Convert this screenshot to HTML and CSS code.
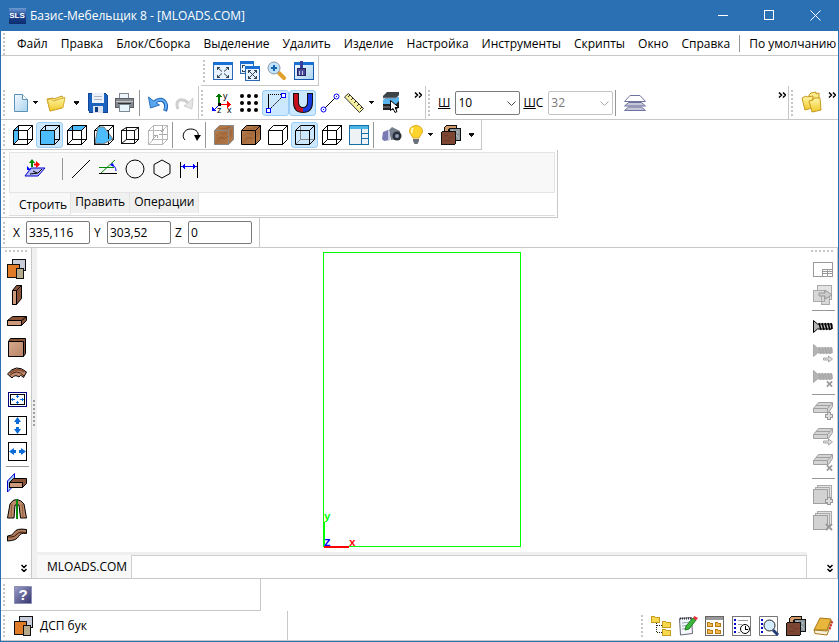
FILE: index.html
```html
<!DOCTYPE html>
<html lang="ru">
<head>
<meta charset="utf-8">
<title>Базис-Мебельщик 8 - [MLOADS.COM]</title>
<link rel="stylesheet" href="styles.css">
</head>
<body>
<svg class="defs" aria-hidden="true">
  <defs>
    <linearGradient id="g-wood" x1="0" y1="0" x2="1" y2="1"><stop offset="0" stop-color="#bd8250"/><stop offset=".5" stop-color="#a86e40"/><stop offset="1" stop-color="#b87c4a"/></linearGradient>
    <linearGradient id="g-gold" x1="0" y1="0" x2="0" y2="1"><stop offset="0" stop-color="#fff6a8"/><stop offset="1" stop-color="#f0c828"/></linearGradient>
    <linearGradient id="g-sky" x1="0" y1="0" x2="1" y2="1"><stop offset="0" stop-color="#f4fafe"/><stop offset="1" stop-color="#a9d3ee"/></linearGradient>
    <linearGradient id="g-violet" x1="0" y1="0" x2="1" y2="1"><stop offset="0" stop-color="#9a9cc8"/><stop offset="1" stop-color="#33356c"/></linearGradient>
    <linearGradient id="g-tan" x1="0" y1="0" x2="1" y2="1"><stop offset="0" stop-color="#d6a98c"/><stop offset="1" stop-color="#b98468"/></linearGradient>
    <linearGradient id="g-logo" x1="0" y1="0" x2="0" y2="1"><stop offset="0" stop-color="#6d9ad2"/><stop offset=".5" stop-color="#1c4592"/><stop offset="1" stop-color="#0d2c6c"/></linearGradient>
  </defs>
  <symbol id="wire" viewBox="0 0 20 20"><path d="M.5 5.500h14v14H.5zM5.500.5h14v14h-14z" fill="none" stroke="currentColor"/><path class="aa" d="M.5 5.500l5-5M14.500 5.500l5-5M14.500 19.500l5-5M.5 19.500l5-5" stroke="currentColor"/></symbol>
  <symbol id="solid" viewBox="0 0 20 20"><path class="aa" d="M.5 5.500l5-5h14v14l-5 5H.5z" stroke="currentColor"/><path d="M.5 5.500h14v14" fill="none" stroke="currentColor"/><path class="aa" d="M14.500 5.500l5-5" stroke="currentColor"/></symbol>
  <symbol id="grain" viewBox="0 0 20 20"><path class="aa" d="M2 17l5-4 4 1 3-3M2 11l4-3 4 1 3-2M5 3l5 1 6-2M17 12V6M3 14l3-2 5 1" fill="none" stroke="#8a562c" opacity=".5"/></symbol>
  <symbol id="stack" viewBox="0 0 20 20"><path d="M5.500.5h13v11h-13z" fill="#c8ccd8" stroke="#111"/><path d="M.5 5.500h12v13H.5z" fill="#e07c28" stroke="#111"/><path d="M9.500 9.500h7v10h-7z" fill="#b5ab8c" stroke="#111"/></symbol>
  <symbol id="fit" viewBox="0 0 20 20"><path d="M.5 1.500h19v17H.5z" fill="#e9f3fd" stroke="#2a68b4"/><path d="M0 1h20v3H0z" fill="#1a6fd4"/><path class="aa" d="M5 7l4 3.500M15 7l-4 3.500M5 16l4-3.500M15 16l-4-3.500" stroke="#345"/><path d="M4.500 9V6.500H7M13 6.500h2.500V9M4.500 14v2.500H7M13 16.500h2.500V14" fill="none" stroke="#345"/></symbol>
  <symbol id="panels" viewBox="0 0 20 20"><path d="M3.500 6.500v-4l2-2h10v4h-8v2z" fill="#d39a6c" stroke="#111"/><path d="M8.500 3.500h11v12h-11z" fill="#8f9a9e" stroke="#111"/><path class="aa" d="M11 5l2 2M16 6l1 2M15 10l2 2M17 13h1" stroke="#c0c8cc"/><path d="M.5 7.500l1-1h13v12l-1 1H.5z" fill="#7c4633" stroke="#111"/><path d="M3 10h4M8 12h4M3 15h6" stroke="#6c3a29"/></symbol>
  <symbol id="screw" viewBox="0 0 20 14"><path class="aa" d="M.5.5v12l4-3.500h14.500V4H4.500z" fill="#b4b4b4" stroke="currentColor"/><path class="aa" d="M6 3l2 7M9 3l2 7M12 3l2 7M15 3l2 7M18 3l1 6" stroke="currentColor" stroke-width="1.500"/></symbol>
  <symbol id="board" viewBox="0 0 20 12"><path class="aa" d="M.5 6.500l5-6h14v4l-4 6H.5z" fill="#d4d4d4" stroke="#a0a0a0"/><path class="aa" d="M.5 6.500h14v4M14.500 6.500l5-6M3 3.500h14" fill="none" stroke="#a0a0a0"/></symbol>
  <symbol id="plate" viewBox="0 0 20 20"><path d="M4.500.5h14v14h-14z" fill="#e2e2e2" stroke="#aaa"/><path d="M2.500 2.500h14v14h-14z" fill="#ddd" stroke="#aaa"/><path d="M.5 4.500h14v14H.5z" fill="#d2d2d2" stroke="#a0a0a0"/></symbol>
  <symbol id="m-plus" viewBox="0 0 8 8"><path d="M2.500.5h3v2h2v3h-2v2h-3v-2h-2v-3h2z" fill="#ddd" stroke="#999"/></symbol>
  <symbol id="m-x" viewBox="0 0 8 8"><path class="aa" d="M1 1l6 6M7 1L1 7" stroke="#999" stroke-width="2"/></symbol>
  <symbol id="m-arrow" viewBox="0 0 10 8"><path class="aa" d="M.5 3h5V1l4 3-4 3V5h-5z" fill="#ddd" stroke="#aaa"/></symbol>
  <symbol id="caret" viewBox="0 0 5 3"><path d="M0 0h5L2.500 3z" fill="#111"/></symbol>
  <symbol id="more" viewBox="0 0 8 6"><path class="aa" d="M1 .5L3.500 3 1 5.500M5 .5L7.500 3 5 5.500" fill="none" stroke="#000" stroke-width="1.500"/></symbol>
  <symbol id="down" viewBox="0 0 6 8"><path class="aa" d="M.5 1L3 3.500 5.500 1M.5 5L3 7.500 5.500 5" fill="none" stroke="#000" stroke-width="1.500"/></symbol>
  <symbol id="folder" viewBox="0 0 20 18"><path class="aa" d="M1 5l6-1 1 1 8-3 1 2-1 10-12 3z" fill="url(#g-gold)" stroke="#c8981c"/><path class="aa" d="M4 17L1.500 6l3-1 3 2L19 3.500l-2 10z" fill="url(#g-gold)" stroke="#d8ac30"/></symbol>
</svg>

<div class="window">
  <header class="title">
    <svg class="logo" width="17" height="16" viewBox="0 0 17 16" aria-hidden="true"><rect width="17" height="16" rx="1" fill="url(#g-logo)"/><text x="8" y="10" text-anchor="middle">SLS</text></svg>
    <h1>Базис-Мебельщик 8 - [MLOADS.COM]</h1>
    <div class="caption">
      <button aria-label="Свернуть"><svg width="11" height="11"><path d="M0 5.500h10" stroke="#fff"/></svg></button>
      <button aria-label="Развернуть"><svg width="11" height="11"><path d="M.5.5h9v9h-9z" fill="none" stroke="#fff"/></svg></button>
      <button aria-label="Закрыть"><svg class="aa" width="11" height="11"><path d="M.5.5l10 10M10.500.5l-10 10" stroke="#fff"/></svg></button>
    </div>
  </header>

  <nav class="menu">
    <i class="grip"></i>
    <div class="items">
      <button>Файл</button><button>Правка</button><button>Блок/Сборка</button><button>Выделение</button><button>Удалить</button><button>Изделие</button><button>Настройка</button><button>Инструменты</button><button>Скрипты</button><button>Окно</button><button>Справка</button>
    </div>
    <i class="sep"></i>
    <button class="preset">По умолчанию</button>
  </nav>

  <div class="viewbar">
    <div class="band framed">
      <i class="grip"></i>
      <button class="tool" aria-label="Показать всё"><svg width="20" height="20"><use href="#fit"/></svg></button>
      <button class="tool" aria-label="Показать всё во всех окнах"><svg width="20" height="20"><path d="M.5.5h13v12H.5z" fill="#e9f3fd" stroke="#2a68b4"/><path d="M0 0h14v3H0z" fill="#1a6fd4"/><path d="M2.500 7V4.500H5M2.500 9v1.500H5" fill="none" stroke="#345"/><path d="M5.500 6.500h14v13h-14z" fill="#e9f3fd" stroke="#2a68b4"/><path d="M5 5h15v3H5z" fill="#1a6fd4"/><path class="aa" d="M9 10l7 7M16 10l-7 7" stroke="#345"/><path d="M8.500 11.500v-2h2M14 9.500h2.500v2M8.500 15v2.500h2M14 17.500h2.500V15" fill="none" stroke="#345"/></svg></button>
      <button class="tool" aria-label="Увеличить"><svg class="aa" width="20" height="20"><path d="M12 12l5 5" stroke="#e3a02c" stroke-width="4" stroke-linecap="round"/><circle cx="7" cy="7" r="6" fill="#bfe3fa" stroke="#8b98a5"/><path d="M4 7h6M7 4v6" stroke="#1766ad" stroke-width="2"/></svg></button>
      <button class="tool" aria-label="Перерисовать"><svg width="20" height="20"><path d="M.5 1.500h19v17H.5z" fill="url(#g-sky)" stroke="#1556b0"/><path d="M0 1h20v3H0z" fill="#1a6fd4"/><path d="M6 0h3v7H6z" fill="#3b3f9c"/><path d="M3.500 7.500h8v7h-8z" fill="#4a4a94" stroke="#22246a"/><path d="M5.500 10v4M8.500 10v4" stroke="#c8c8e8"/></svg></button>
    </div>
  </div>

  <div class="mainbar">
    <div class="band file">
      <i class="grip"></i>
      <button class="tool split" aria-label="Создать"><svg class="aa" width="14" height="18"><path d="M.5.5h8l5 5v12H.5z" fill="url(#g-sky)" stroke="#5b92b5"/><path d="M8.500.5v5h5" fill="#fff" stroke="#5b92b5"/></svg><svg width="5" height="3"><use href="#caret"/></svg></button>
      <button class="tool split wide" aria-label="Открыть"><svg width="20" height="18"><use href="#folder"/></svg><svg width="7" height="4"><use href="#caret"/></svg></button>
      <button class="tool" aria-label="Сохранить"><svg width="20" height="20"><path d="M.5.5h17l2 2v17H2l-1.500-2z" fill="#1c63c0" stroke="#10479a"/><path d="M4 0h12v10H4z" fill="#eef2f8"/><path d="M6 3.500h8M6 6.500h8" stroke="#a9b4c4"/><path d="M5 13h10v7H5z" fill="#dce3ee"/><path d="M7 14h3v5H7z" fill="#123a80"/></svg></button>
      <button class="tool" aria-label="Печать"><svg width="19" height="19"><path d="M4.500.5h9v6h-9z" fill="#eef5fb" stroke="#7d8a96"/><path d="M.5 5.500h18v9H.5z" fill="#85898f" stroke="#5b6067"/><path d="M1 8.500h17" stroke="#c4c8cc"/><path d="M4.500 11.500h10v7h-10z" fill="#e8f4fc" stroke="#7d8a96"/><path d="M3 10.500h13" stroke="#333"/></svg></button>
      <i class="sep"></i>
      <button class="tool" aria-label="Отменить"><svg class="aa" width="20" height="18"><path d="M17 17c3-7-1-12-6-11-2 0-3 1-4 2" fill="none" stroke="#1d5fb4" stroke-width="4"/><path d="M.5 3l2 11 9-3-4-2.500z" fill="#58a7ee" stroke="#2a6fc0"/><path d="M17 16c3-7-1-11-6-10-2 0-3 1-5 3" fill="none" stroke="#64b1f4" stroke-width="2"/></svg></button>
      <button class="tool" aria-label="Повторить"><svg class="aa" width="20" height="18"><path d="M3 15c-3-7 1-10 5-9 2 0 3 1 5 3" fill="none" stroke="#cfcfcf" stroke-width="3"/><path d="M18 4l-1 11-8-3 4-3z" fill="#e6e6e6" stroke="#cfcfcf"/></svg></button>
    </div>
    <div class="band snap">
      <i class="grip"></i>
      <button class="tool" aria-label="Система координат"><svg width="20" height="20"><path d="M7 2v10" stroke="#007800" stroke-width="2"/><path d="M4 4h6L7 0z" fill="#007800"/><path d="M8 11.500h9" stroke="#f00"/><path d="M15 8v7l4-3.500z" fill="#f00"/><path d="M7 12l-5 5" stroke="#00c"/><path d="M0 14v4h5z" fill="#00f"/><path d="M6 10h3v3H6z"/><text x="11" y="6">y</text><text x="15" y="20">x</text><text x="5" y="20">z</text></svg></button>
      <button class="tool" aria-label="Сетка"><svg class="aa" width="20" height="20"><g id="dots"><circle cx="3" cy="3" r="2"/><circle cx="10" cy="3" r="2"/><circle cx="17" cy="3" r="2"/></g><use href="#dots" y="7"/><use href="#dots" y="14"/></svg></button>
      <button class="tool on" aria-label="Ортогональное построение"><svg width="20" height="20"><path d="M2.500 2v13" stroke="#000"/><path d="M2 1.500h13" stroke="#000" stroke-dasharray="1 1"/><path class="aa" d="M5 15L16 4" stroke="#000" stroke-dasharray="2 1"/><path d="M15.500.5h4v4h-4zM.5 15.500h4v4h-4z" fill="#fff" stroke="#00f"/></svg></button>
      <button class="tool on" aria-label="Привязка"><svg class="aa" width="20" height="20"><path d="M3 0v9q0 8 7 8" fill="none" stroke="#111" stroke-width="6"/><path d="M17 0v9q0 8-7 8" fill="none" stroke="#111" stroke-width="6"/><path d="M3 1v8q0 8 7 8" fill="none" stroke="#c8101c" stroke-width="4"/><path d="M17 1v8q0 8-7 8" fill="none" stroke="#1838e0" stroke-width="4"/></svg></button>
      <button class="tool" aria-label="Отрезок по точкам"><svg class="aa" width="20" height="20"><path d="M4 16L16 4" stroke="#000"/><g fill="#fff" stroke="#00f"><circle cx="3.500" cy="16.500" r="2.500"/><circle cx="16.500" cy="3.500" r="2.500"/></g><path d="M3 16h1v1H3zM16 3h1v1h-1z" fill="#00f"/></svg></button>
      <button class="tool split" aria-label="Измерение"><svg class="aa" width="20" height="20"><path d="M.5 4l4-3.500 15 15-4 4z" fill="#f7efa0" stroke="#333"/><path d="M6 2L4 4M9 5L7 7M12 8l-2 2M15 11l-2 2M18 14l-2 2" stroke="#333"/></svg><svg width="5" height="3"><use href="#caret"/></svg></button>
      <button class="tool" aria-label="Выбор слоя"><svg class="aa" width="20" height="21"><path d="M1 12l4-3h12v6l-3 3H1z" fill="#222"/><path d="M1 8l4-3h12v4l-3 3H1z" fill="#58b4ec"/><path d="M1 4l4-4h12v3l-3 3H1z" fill="#3c4448"/><path d="M1 6h13l3-3M1 15h13" stroke="#889" fill="none"/><path d="M8.500 8.500v10l2.500-2 2 4 2-1-2-4h4z" fill="#fff" stroke="#000"/></svg></button>
      <button class="more" aria-label="Ещё"><svg width="8" height="6"><use href="#more"/></svg></button>
    </div>
    <div class="band steps">
      <i class="grip"></i>
      <label for="w">Ш</label>
      <span class="combo"><select id="w"><option>10</option></select><svg class="aa" width="9" height="5"><path d="M.5.5l4 4 4-4" fill="none" stroke="#444"/></svg></span>
      <label for="wc"><u>Ш</u>С</label>
      <span class="combo off"><select id="wc" disabled><option>32</option></select><svg class="aa" width="9" height="5"><path d="M.5.5l4 4 4-4" fill="none" stroke="#aaa"/></svg></span>
      <i class="sep"></i>
      <button class="tool layers" aria-label="Слои"><svg class="aa" width="22" height="16"><path d="M.5 15.500l4-3.500h13l4 3.500zM.5 11l4-3.500h13l4 3.500z" fill="#c5c6d6" stroke="#70739f"/><path d="M.5 6.500L6 .5h10l5.500 6z" fill="#fff" stroke="#70739f"/></svg></button>
      <button class="more end" aria-label="Ещё"><svg width="8" height="6"><use href="#more"/></svg></button>
    </div>
    <div class="band docs">
      <i class="grip"></i>
      <button class="tool" aria-label="Библиотека"><svg class="aa" width="21" height="21"><path d="M8 3l2-2 5-1v2l3-1v12L8 14z" fill="url(#g-gold)" stroke="#c8981c"/><path d="M1 6l4-2 1 1 6-1-1 12-7 2z" fill="url(#g-gold)" stroke="#c8981c"/><path d="M8 9l4-1 1-2h6l1 12-9 2z" fill="url(#g-gold)" stroke="#c8981c"/></svg></button>
      <button class="more" aria-label="Ещё"><svg width="8" height="6"><use href="#more"/></svg></button>
    </div>
  </div>

  <div class="shadebar band">
    <i class="grip"></i>
    <button class="tool" aria-label="Вид слева"><svg width="20" height="20"><path d="M1 5l4-4v14l-4 4z" fill="#4cbcfc"/><use href="#wire"/></svg></button>
    <button class="tool on" aria-label="Вид спереди"><svg width="20" height="20"><use href="#wire"/><path d="M.5 5.500h14v14H.5z" fill="#4cbcfc" stroke="#111"/></svg></button>
    <button class="tool" aria-label="Вид сверху"><svg width="20" height="20"><path d="M1 5l4-4h14l-4 4z" fill="#4cbcfc"/><use href="#wire"/></svg></button>
    <button class="tool" aria-label="Вид в плоскости"><svg width="20" height="20"><use href="#wire"/><path class="aa" d="M4 2L1 18l8 1 10-5-9-12z" fill="#4cbcfc" stroke="#777"/><path d="M.5 5v14.500h14M14.500 5.500v8" fill="none" stroke="#111"/></svg></button>
    <button class="tool" aria-label="Перспектива"><svg width="20" height="20"><path d="M.5 5.500h13v13H.5zM5.500 2.500h12v12h-12z" fill="none" stroke="#111"/><path class="aa" d="M.5 5.500l5-3M13.500 5.500l4-3M13.500 18.500l4-4M.5 18.500l5-4" stroke="#111"/></svg></button>
    <button class="tool pale" aria-label="Центр вида"><svg width="20" height="20"><use href="#wire"/><path d="M14 0v7M11 9h8M6 10h3v3" stroke="#aaa" fill="none"/><path class="aa" d="M4 15l5-5M12 5l2 2 2-2" fill="none" stroke="#aaa"/></svg></button>
    <i class="sep"></i>
    <button class="tool" aria-label="Поворот"><svg class="aa" width="20" height="20"><path d="M4 15C0 11 3 4 9.500 4S18 8 17 12" fill="none" stroke="#000"/><path d="M13 10h7l-4 6z"/></svg></button>
    <i class="sep"></i>
    <button class="tool grey" aria-label="Текстура без рёбер"><svg width="20" height="20" fill="url(#g-wood)"><use href="#solid"/><use href="#grain"/></svg></button>
    <button class="tool" aria-label="Текстура с рёбрами"><svg width="20" height="20" fill="url(#g-wood)"><use href="#solid"/><use href="#grain"/></svg></button>
    <button class="tool" aria-label="Без невидимых линий"><svg width="20" height="20" fill="#fff"><use href="#solid"/></svg></button>
    <button class="tool on" aria-label="Невидимые линии тонкие"><svg width="20" height="20" fill="none"><path d="M5.500 1v13.500H19" stroke="#888"/><path class="aa" d="M1 19l4.500-4.500" stroke="#888"/><use href="#solid"/></svg></button>
    <button class="tool" aria-label="Каркас"><svg width="20" height="20"><use href="#wire"/></svg></button>
    <button class="tool" aria-label="Окна проекций"><svg width="20" height="20"><path d="M.5.5h19v19H.5z" fill="#eef2f4" stroke="#1570a8"/><path d="M1 1h18v3H1z" fill="#4fb4e6"/><path d="M12.500 4v15M12 8.500h7M12 13.500h7" stroke="#1570a8"/></svg></button>
    <i class="sep"></i>
    <button class="tool" aria-label="Снимок"><svg class="aa" width="20" height="15"><path d="M1 5l5-2 2 2v8l-6 1-2-2z" fill="#7a7ab4"/><path d="M7 3l3-3 4 2 4 2v8l-9 1z" fill="#777f8c"/><path d="M6 4h2v9H6z" fill="#c9cbe4"/><circle cx="15" cy="9" r="4.500" fill="#2a2e38"/><circle cx="15" cy="9" r="2" fill="#8e9cb8"/></svg></button>
    <button class="tool split" aria-label="Освещение"><svg class="aa" width="14" height="19"><path d="M4 13C3 10 .5 9 .5 6a6.500 5.500 0 0 1 13 0c0 3-2.500 4-3.500 7z" fill="#ffd42c" stroke="#e0a820"/><path d="M4 3q-2 2-1 5" stroke="#fff6b0" stroke-width="2" fill="none"/><path d="M4 14h6v2l-1.500 3h-3L4 16z" fill="#6c7078"/></svg><svg width="5" height="3"><use href="#caret"/></svg></button>
    <button class="tool split wide" aria-label="Материалы"><svg width="20" height="20"><use href="#panels"/></svg><svg width="7" height="4"><use href="#caret"/></svg></button>
  </div>

  <div class="build">
    <i class="grip"></i>
    <div class="tabs">
      <div class="sheet">
        <button class="tool plane" aria-label="Рабочая плоскость"><svg class="aa" width="22" height="20"><path d="M1 17l6-8h14l-7 8z" fill="#b8bcf4" stroke="#00c"/><path d="M6 15l8-1 4-4M9 12l4 2" stroke="#000" fill="none"/><path d="M8 4v4" stroke="#080" stroke-width="2"/><path d="M5 4h6L8 0z" fill="#080"/><path d="M10 5.500h3" stroke="#f00" stroke-width="2"/><path d="M12 2v7l4-3.500z" fill="#f00"/><path d="M3 7v4h4z" fill="#00f"/></svg></button>
        <i class="sep"></i>
        <button class="tool" aria-label="Отрезок"><svg class="aa" width="20" height="20"><path d="M1 19L19 1" stroke="#000"/></svg></button>
        <button class="tool" aria-label="Угол"><svg class="aa" width="20" height="20"><path d="M1 8.500h15M2 15L17 1" stroke="#080"/><path d="M1 14.500h18" stroke="#000"/><path d="M13 5q5 2 5 7" fill="none" stroke="#00f"/><path d="M12 6l3-2 1 4z" fill="#00f"/></svg></button>
        <button class="tool" aria-label="Окружность"><svg class="aa" width="20" height="20"><circle cx="10" cy="10" r="9" fill="none" stroke="#000"/></svg></button>
        <button class="tool" aria-label="Многоугольник"><svg class="aa" width="20" height="20"><path d="M10 1l8 4.500v9L10 19l-8-4.500v-9z" fill="none" stroke="#000"/></svg></button>
        <button class="tool" aria-label="Размер"><svg width="20" height="20"><path d="M1.500 3v16M18.500 3v16" stroke="#000"/><path d="M3 7.500h14" stroke="#00f"/><path d="M2 7.500L6 5v5zM18 7.500L14 5v5z" fill="#00f"/></svg></button>
      </div>
      <div class="tablist" role="tablist">
        <button role="tab" aria-selected="true">Строить</button><button role="tab" aria-selected="false">Править</button><button role="tab" aria-selected="false">Операции</button>
      </div>
    </div>
  </div>

  <div class="coords">
    <div class="band">
      <i class="grip"></i>
      <label for="cx">X</label><input id="cx" value="335,116">
      <label for="cy">Y</label><input id="cy" value="303,52">
      <label for="cz">Z</label><input id="cz" value="0">
    </div>
  </div>

  <main class="work">
    <aside class="side left">
      <i class="grip flat"></i>
      <button aria-label="Материал панели"><svg width="20" height="20"><use href="#stack"/></svg></button>
      <button aria-label="Вертикальная панель"><svg class="aa" width="10" height="20"><path d="M.5 5.500l4-5h5v13l-5 6h-4z" fill="#8a5236" stroke="#000"/><path d="M.5 5.500h4v14h-4z" fill="#cf9a7c" stroke="#000"/><path d="M4.500 5.500l5-5" stroke="#000"/></svg></button>
      <button aria-label="Горизонтальная панель"><svg class="aa" width="20" height="10"><path d="M.5 4.500l5-4h14v4l-5 5H.5z" fill="#8a5236" stroke="#000"/><path d="M.5 4.500h14v5H.5z" fill="#cf9a7c" stroke="#000"/><path d="M14.500 4.500l5-4" stroke="#000"/></svg></button>
      <button aria-label="Фронтальная панель"><svg class="aa" width="18" height="19"><path d="M.5 3.500l2-3h15v15l-2 3H.5z" fill="#8a5236" stroke="#000"/><path d="M.5 3.500h15v15H.5z" fill="url(#g-tan)" stroke="#000"/></svg></button>
      <button aria-label="Гнутая панель"><svg class="aa" width="20" height="12"><path d="M.5 7Q9-4 19.500 5l-3 5.500q-2-2-3-2L12 10Q8 7 5 11z" fill="#c08a6c" stroke="#000"/><path d="M2 9q8-8 15 0" fill="none" stroke="#4a2412"/><path d="M3 6q7-6 14-1" stroke="#8a5236" stroke-width="2" fill="none"/></svg></button>
      <button aria-label="Растянуть во все стороны"><svg width="19" height="15"><path d="M.5.5h18v14H.5z" fill="#fff" stroke="#000080"/><path d="M2.500 2.500h14v10h-14z" fill="none" stroke="#000"/><path d="M9.500 3v3M9.500 9v3M3 7.500h4M12 7.500h4M8 4.500h3M8 10.500h3M4.500 6v3M14.500 6v3" stroke="#0a6cd8"/></svg></button>
      <button aria-label="Растянуть по высоте"><svg width="19" height="19"><path d="M.5.5h18v18H.5z" fill="#fff" stroke="#000"/><path d="M9.500 3v5M9.500 11v5" stroke="#0a6cd8" stroke-width="3"/><path class="aa" d="M6 6h7L9.500 1zM6 13h7l-3.500 5z" fill="#0a6cd8"/></svg></button>
      <button aria-label="Растянуть по ширине"><svg width="19" height="19"><path d="M.5.5h18v18H.5z" fill="#fff" stroke="#000"/><path d="M3 9.500h5M11 9.500h5" stroke="#0a6cd8" stroke-width="3"/><path class="aa" d="M6 6v7L1 9.500zM13 6v7l5-3.500z" fill="#0a6cd8"/></svg></button>
      <i class="rule"></i>
      <button aria-label="Панель по плоскости"><svg class="aa" width="20" height="20"><path d="M.5 19V8l7-7.500V12z" fill="#a8ccf4" stroke="#00c"/><path d="M2.500 9.500l4-4h13v5l-4 4h-13z" fill="#8a5236" stroke="#000"/><path d="M2.500 9.500h13v5h-13z" fill="#cf9a7c" stroke="#000"/></svg></button>
      <button aria-label="Симметрия"><svg class="aa" width="20" height="20"><path d="M.5 19L3 5q3-5 7-4.500T17 5l2.500 14h-6L12 6H8L7 19z" fill="#bf8c6c" stroke="#000"/><path d="M5 5Q4 12 4 19M15 5q1 7 1 14" stroke="#8a5a3c" fill="none"/><path d="M10 0v20" stroke="#0a8a0a" stroke-width="2"/></svg></button>
      <button aria-label="Профиль по траектории"><svg class="aa" width="20" height="13"><path d="M.5 7q5 0 7-4t12-2.500v4q-6-1-8 3T.5 12z" fill="#b07a5c" stroke="#000"/><path d="M1 8h3q4 0 6-3 3-3 9-1" stroke="#3c1c0c" fill="none"/></svg></button>
      <button class="tail" aria-label="Ещё"><svg width="6" height="8"><use href="#down"/></svg></button>
    </aside>
    <div class="splitter"><i class="grip"></i></div>
    <section class="doc">
      <div class="canvas">
        <svg class="model" width="198" height="296" aria-label="Модель">
          <path d="M.5.5h197v294H.5z" fill="none" stroke="#0f0"/>
          <path d="M1 270v25" stroke="#0f0" stroke-width="2"/><path d="M1 295h25" stroke="#f00" stroke-width="2"/>
          <text x="1" y="268" fill="#0f0">y</text><text x="26" y="294" fill="#f00">x</text><text x="1" y="294" fill="#00f">Z</text>
        </svg>
      </div>
      <div class="doctabs" role="tablist"><button role="tab" aria-selected="true">MLOADS.COM</button><span></span></div>
    </section>
    <aside class="side right">
      <i class="grip flat"></i>
      <button aria-label="Спецификация"><svg width="20" height="15"><path d="M.5.5h19v14H.5z" fill="#fff" stroke="#999"/><path d="M9 7.500h10M9 9.500h10M9 11.500h10M9.500 7v7M14.500 7v7" stroke="#999"/></svg></button>
      <button aria-label="Экспорт"><svg width="20" height="20"><path d="M4.500.5h14v14h-14z" fill="#e4e4e4" stroke="#aaa"/><path d="M.5 5.500h11v11H.5zM8.500 9.500h8v10h-8z" fill="#d8d8d8" stroke="#aaa"/><path class="aa" d="M6 8h6V5l7 5-7 4v-3H6z" fill="#ccc" stroke="#999"/></svg></button>
      <i class="rule"></i>
      <button class="dark" aria-label="Крепёж"><svg width="20" height="14"><use href="#screw"/></svg></button>
      <button aria-label="Переместить крепёж"><svg width="20" height="18"><use href="#screw" width="20" height="14"/><use href="#m-arrow" x="10" y="11" width="10" height="8"/></svg></button>
      <button aria-label="Удалить крепёж"><svg width="20" height="18"><use href="#screw" width="20" height="14"/><use href="#m-x" x="13" y="10" width="7" height="8"/></svg></button>
      <i class="rule"></i>
      <button aria-label="Добавить кромку"><svg width="20" height="18"><use href="#board" width="20" height="12"/><use href="#m-plus" x="12" y="10" width="8" height="8"/></svg></button>
      <button aria-label="Переместить кромку"><svg width="20" height="18"><use href="#board" width="20" height="12"/><use href="#m-arrow" x="10" y="10" width="10" height="8"/></svg></button>
      <button aria-label="Удалить кромку"><svg width="20" height="18"><use href="#board" width="20" height="12"/><use href="#m-x" x="13" y="10" width="7" height="8"/></svg></button>
      <i class="rule"></i>
      <button aria-label="Добавить облицовку"><svg width="20" height="20"><use href="#plate"/><use href="#m-plus" x="12" y="12" width="8" height="8"/></svg></button>
      <button aria-label="Удалить облицовку"><svg width="20" height="20"><use href="#plate"/><use href="#m-x" x="12" y="12" width="8" height="8"/></svg></button>
      <button class="tail" aria-label="Ещё"><svg width="6" height="8"><use href="#down"/></svg></button>
    </aside>
  </main>

  <div class="helpbar">
    <div class="band"><i class="grip"></i>
      <button class="tool" aria-label="Справка"><svg class="aa help" width="18" height="18"><path d="M.5.5h17v17H.5z" fill="url(#g-violet)" stroke="#8c8eb8"/><text x="9" y="14" text-anchor="middle">?</text></svg></button>
    </div>
  </div>

  <footer class="status">
    <div class="material"><i class="grip"></i><svg width="20" height="20"><use href="#stack"/></svg><span>ДСП бук</span></div>
    <div class="band">
      <i class="grip"></i>
      <button class="tool" aria-label="Дерево модели"><svg width="20" height="20"><path d="M5.500 7v9.500H12M6 9.500h6" fill="none" stroke="#222" stroke-dasharray="1 1"/><g id="fold" fill="#f8d84c" stroke="#c89c20"><path d="M.5.5h3l1 1h4v5h-8z"/></g><use href="#fold" x="11" y="5"/><use href="#fold" x="11" y="13"/></svg></button>
      <button class="tool" aria-label="Свойства"><svg class="aa" width="20" height="20"><path d="M1.500 2.500l12-1 1 16-12 1.500z" fill="#f4f7fb" stroke="#667"/><path d="M4 7l8-1M4 10l8-1M4 13l8-1" stroke="#9ab"/><path d="M2 2.500h12" stroke="#333" stroke-width="2" stroke-dasharray="1 1"/><path d="M7 14l1-4 7-8 3 2-7 9z" fill="#3cb83c" stroke="#1d7a1d"/><path d="M15 2l1.500-2L20 2l-2 2.500z" fill="#e8343c"/></svg></button>
      <button class="tool" aria-label="Библиотека фрагментов"><svg width="20" height="20"><path d="M.5.5h18v19H.5z" fill="#fff" stroke="#666"/><path d="M1 2.500h17" stroke="#999" stroke-width="3"/><g fill="#f0b850" stroke="#b87810"><path id="f2" d="M2.500 6.500h2l1 1h2v3h-5z"/><use href="#f2" x="8"/><use href="#f2" y="7"/><use href="#f2" x="8" y="7"/></g></svg></button>
      <button class="tool" aria-label="История"><svg width="20" height="20"><path d="M.5.5h18v19H.5z" fill="#fff" stroke="#777"/><path d="M3 3v14" stroke="#00c" stroke-width="2" stroke-dasharray="2 2"/><path d="M6 4.500h10M6 8.500h4M6 16.500h2" stroke="#999"/><circle class="aa" cx="13" cy="13" r="4.500" fill="#fff" stroke="#000"/><path d="M13.500 10v3.500H16" fill="none" stroke="#000"/></svg></button>
      <button class="tool" aria-label="Поиск"><svg class="aa" width="20" height="20"><path d="M.5.5h18v19H.5z" fill="#fff" stroke="#777"/><path d="M3 3v14" stroke="#00c" stroke-width="2" stroke-dasharray="2 2"/><path d="M14 14l5 5" stroke="#223c78" stroke-width="3"/><circle cx="10.500" cy="9.500" r="5.500" fill="#d4ecfc" stroke="#222"/></svg></button>
      <button class="tool" aria-label="Материалы"><svg width="20" height="20"><use href="#panels"/></svg></button>
      <button class="tool" aria-label="Справочник"><svg class="aa" width="20" height="18"><path d="M1 13L7 1l11 1-4 11z" fill="#e8b63c" stroke="#a87818"/><path d="M1 13l13 1 4-11v4l-4 11L2 16.500z" fill="#f6f0dc" stroke="#a87818"/><path d="M18 5l2 .5M17 8l2 .5M16 11l2 .5" stroke="#d83030" stroke-width="2"/></svg></button>
    </div>
  </footer>
</div>
</body>
</html>
```
FILE: styles.css
```css
* { box-sizing: border-box; }

body {
  margin: 0;
  background: #fff;
  color: #000;
  font: 12px/16px "Open Sans", "Noto Sans", sans-serif;
}

button, input, select { font: inherit; color: inherit; }
button { padding: 0; border: 0; background: none; white-space: nowrap; }
svg { display: block; flex: none; overflow: visible; shape-rendering: crispEdges; }
.aa { shape-rendering: auto; }
.defs { position: absolute; width: 0; height: 0; }

.window {
  display: flex;
  flex-direction: column;
  min-height: 100vh;
  border: 1px solid #2b70b2;
  border-top: 0;
}

/* Title bar */
.title {
  display: flex;
  align-items: center;
  height: 31px;
  padding-left: 8px;
  background: #2b70b2;
  color: #fff;
}
.title h1 { flex: 1; margin: 0 0 0 4px; font-size: 12px; font-weight: 400; }
.logo text { font: bold 8px "Liberation Sans", sans-serif; fill: #fff; }
.caption { display: flex; }
.caption button { display: grid; place-items: center; width: 46px; height: 31px; }

/* Shared bar parts */
.grip {
  flex: none;
  align-self: center;
  width: 2px;
  height: 22px;
  margin: 0 4px 0 2px;
  background: repeating-linear-gradient(to bottom, #c6c6c6 0 2px, transparent 2px 4px);
}
.grip.flat {
  width: 24px;
  height: 2px;
  margin: 2px 0 4px;
  background: repeating-linear-gradient(to right, #c6c6c6 0 2px, transparent 2px 4px);
}
.band { display: flex; align-items: center; }
.sep { flex: none; width: 1px; height: 26px; margin: 0 4px 0 1px; background: #969696; }
.tool {
  display: flex;
  flex: none;
  align-items: center;
  justify-content: center;
  width: 27px;
  height: 26px;
  border: 1px solid transparent;
  border-radius: 3px;
}
.tool.on { border-color: #99cdf5; background: #cce8ff; }
.tool.split { gap: 5px; width: 32px; }
.tool.split.wide { gap: 7px; width: 42px; }
.tool.pale { color: #b8b8b8; }
.tool.grey { color: #888; }
.more { display: grid; place-items: center; align-self: flex-start; width: 13px; height: 18px; }
.tool text { font: 9px/1 "Liberation Sans", sans-serif; }

/* Menu */
.menu { display: flex; align-items: center; height: 25px; padding-top: 1px; border-bottom: 1px solid #c8c8c8; }
.menu .items { display: flex; gap: 13px; padding-left: 8px; }
.menu .sep { height: 17px; margin: 0 9px; }

/* View toolbar */
.viewbar { display: flex; height: 30px; padding-left: 200px; }
.viewbar .band { padding-right: 1px; border: solid #c8c8c8; border-width: 0 1px 1px 0; }

/* Main toolbars */
.mainbar { display: flex; height: 34px; border-bottom: 1px solid #c8c8c8; }
.mainbar .band + .band { border-left: 1px solid #c8c8c8; }
.mainbar .grip { height: 26px; margin-right: 5px; }
.snap .tool:nth-of-type(7) { margin-left: 3px; }
.snap .more { margin: 0 1px 0 6px; }
.steps { flex: 1; }
.steps label { margin: 0 5px 0 3px; }
.steps label:first-of-type { text-decoration: underline; }
.steps .sep { margin: 0 5px 0 2px; }
.steps .end { margin-left: auto; }
.combo { position: relative; display: block; width: 65px; }
.combo select {
  appearance: none;
  display: block;
  width: 100%;
  height: 24px;
  padding: 0 2px;
  border: 1px solid #7a7a7a;
  border-radius: 2px;
  background: #fff;
}
.combo svg { position: absolute; right: 4px; top: 10px; pointer-events: none; }
.combo.off select { border-color: #c4c4c4; color: #777; opacity: 1; }

/* Shading toolbar */
.shadebar { align-self: flex-start; height: 30px; padding-right: 2px; border: solid #c8c8c8; border-width: 0 1px 1px 0; }

/* Construction tabs */
.build {
  display: flex;
  align-self: flex-start;
  width: 557px;
  max-width: 100%;
  height: 68px;
  padding: 2px 2px 0 0;
  border: solid #c8c8c8;
  border-width: 0 1px 1px 0;
}
.build > .grip { align-self: flex-start; height: 62px; }
.tabs { flex: 1; border-bottom: 1px solid #dcdcdc; margin-bottom: 1px; }
.sheet {
  display: flex;
  align-items: center;
  height: 41px;
  padding: 0 0 8px 11px;
  border: 1px solid #e4e4e4;
  background: #f8f8f8;
}
.sheet .plane { margin-right: 13px; }
.sheet .sep { height: 22px; }
.tablist { display: flex; align-items: flex-start; }
.tablist button {
  height: 20px;
  padding: 0 4px 2px;
  border-right: 1px solid #e4e4e4;
  background: #f0f0f0;
}
.tablist [aria-selected="true"] { height: 22px; padding: 2px 3px 0 10px; background: #f8f8f8; }

/* Coordinates */
.coords { display: flex; height: 30px; border-bottom: 1px solid #c8c8c8; }
.coords .band { padding-right: 7px; border-right: 1px solid #c8c8c8; }
.coords label { width: 17px; padding-left: 4px; }
.coords input {
  width: 64px;
  height: 23px;
  padding: 0 2px;
  border: 1px solid #7a7a7a;
  border-radius: 2px;
}

/* Work area */
.work { display: flex; flex: 1; min-height: 0; border-bottom: 1px solid #c8c8c8; }
.side { display: flex; flex: none; flex-direction: column; align-items: center; width: 31px; padding-left: 2px; border-right: 1px solid #c8c8c8; }
.side button { display: grid; place-items: center; width: 26px; height: 26px; color: #a8a8a8; }
.side .dark { color: #000; }
.side .rule { width: 23px; height: 1px; margin: 2px 0 3px; background: #969696; }
.side .tail { height: 16px; margin-top: auto; margin-bottom: 2px; padding-left: 13px; }
.splitter { display: flex; width: 5px; background: #f0f0f0; }
.splitter .grip { height: 26px; margin: 0 1px; background: repeating-linear-gradient(to bottom, #a0a0a0 0 2px, transparent 2px 4px); }
.doc { display: flex; flex: 1; flex-direction: column; min-width: 0; }
.canvas { display: flex; flex: 1; justify-content: center; padding-top: 4px; }
.model text { font: bold 11px "Liberation Mono", monospace; }
.doctabs { display: flex; height: 26px; border-top: 3px solid #efefef; }
.doctabs button { padding: 0 4px 0 10px; background: #f8f8f8; }
.doctabs span { flex: 1; border: solid #d0d0d0; border-width: 1px 1px 0 1px; }

/* Bottom bars */
.helpbar { display: flex; height: 32px; }
.helpbar .band { width: 260px; border: solid #c8c8c8; border-width: 0 1px 1px 0; }
.tool .help text { font: bold 15px "Liberation Sans", sans-serif; fill: #fff; }
.status { display: flex; align-items: center; justify-content: space-between; height: 30px; border-bottom: 1px solid #c8c8c8; }
.material { display: flex; align-items: center; align-self: stretch; width: 287px; border-right: 1px solid #c8c8c8; }
.material svg { margin: 0 6px 0 5px; }
.status .band { padding-right: 2px; }
```
